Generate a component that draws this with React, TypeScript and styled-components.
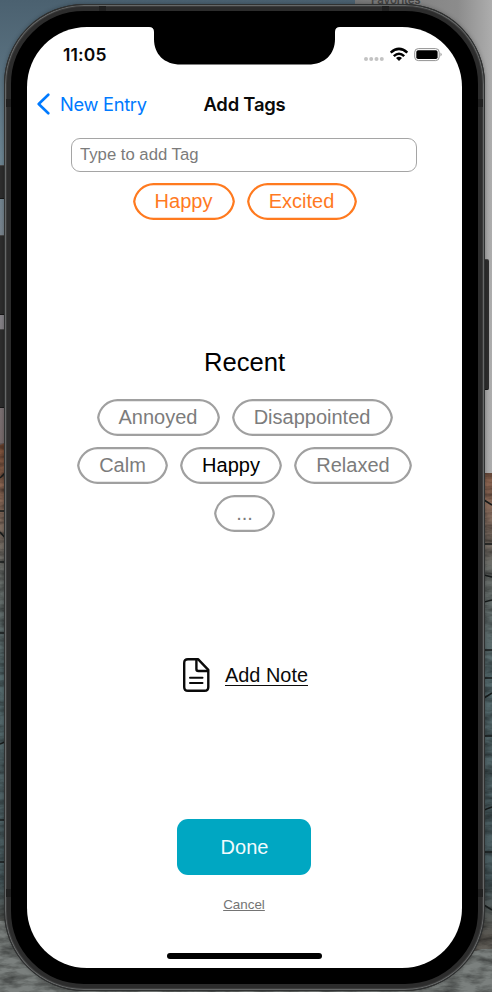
import React from "react";
import styled, { createGlobalStyle, css } from "styled-components";

const GlobalStyle = createGlobalStyle`
  * { box-sizing: border-box; }
  body { margin: 0; overflow: hidden; }
  button { font: inherit; border: 0; background: none; padding: 0; cursor: pointer; }
`;

const helvetica = css`font-family: "Liberation Sans", Arial, sans-serif;`;
const system = css`font-family: Inter, "Liberation Sans", sans-serif;`;

const Desktop = styled.div`
  position: relative;
  width: 492px;
  height: 992px;
  padding: 4px 7px 1px 4px;
  overflow: hidden;
  background: #566a76;
`;

const Wallpaper = styled.svg`
  position: absolute;
  inset: 0;
`;

const WindowLabel = styled.span`
  ${system}
  position: absolute;
  left: 371px;
  top: -7px;
  font-size: 11.5px;
  line-height: 14px;
  font-weight: 600;
  letter-spacing: -0.2px;
  color: #454545;
`;

const SideButton = styled.span<{ $top: number; $height: number; $right?: boolean }>`
  position: absolute;
  top: ${(p) => p.$top}px;
  ${(p) => (p.$right ? "right: 3px; width: 5px; border-radius: 0 2px 2px 0;" : "left: 0; width: 5px;")}
  height: ${(p) => p.$height}px;
  background: #2d2d2d;
  border-top: 1px solid #494949;
  border-bottom: 1px solid #171717;
`;

const Phone = styled.main`
  position: relative;
  width: 481px;
  height: 987px;
  padding: 16px;
  border-radius: 80px;
  background: #000;
  border: 7px solid #2c2c2c;
  box-shadow: 0 0 4px rgba(0, 0, 0, 0.3);
  &::before {
    content: "";
    position: absolute;
    inset: -7px;
    border-radius: 80px;
    border: 1px solid #303232;
    box-shadow: inset 0 0 0 1px #666868, inset 0 0 0 2px #3b3b3b;
  }
`;

const Antenna = styled.span<{ $side: "left" | "right" | "top"; $at: number }>`
  position: absolute;
  background: #202020;
  ${(p) =>
    p.$side === "top"
      ? `top: -5px; left: ${p.$at}px; width: 7px; height: 5px;`
      : `${p.$side}: -5px; top: ${p.$at}px; width: 5px; height: 8px;`}
`;

const Screen = styled.section`
  position: relative;
  display: flex;
  flex-direction: column;
  align-items: center;
  width: 435px;
  height: 941px;
  border-radius: 60px;
  background: #fff;
  overflow: hidden;
`;

const Notch = styled.svg`
  position: absolute;
  top: -1px;
  left: 122px;
`;

const StatusBar = styled.div`
  display: flex;
  justify-content: space-between;
  align-items: center;
  width: 100%;
  height: 55px;
  padding: 0 20.5px 0 36px;
`;

const Time = styled.time`
  ${system}
  font-size: 17.5px;
  font-weight: 600;
  letter-spacing: 0.15px;
  color: #080808;
`;

const NavBar = styled.header`
  display: grid;
  grid-template-columns: 1fr auto 1fr;
  align-items: center;
  width: 100%;
  height: 43px;
  margin-bottom: 2px;
  padding: 0 10px;
`;

const BackButton = styled.button`
  ${system}
  display: flex;
  align-items: center;
  gap: 9px;
  font-size: 18.3px;
  letter-spacing: -0.3px;
  color: #007aff;
  white-space: nowrap;
`;

const Title = styled.h1`
  ${system}
  margin: 0;
  font-size: 18.4px;
  font-weight: 600;
  letter-spacing: -0.2px;
  color: #090909;
`;

const TagInput = styled.input`
  ${helvetica}
  width: 346px;
  height: 34px;
  margin: 11px 1px 0 0;
  padding: 0 8px;
  border: 1px solid #a5a5a5;
  border-radius: 9px;
  outline: 0;
  font-size: 16.7px;
  &::placeholder { color: #7b7b7b; opacity: 1; }
`;

const TagList = styled.div<{ $offset: number }>`
  display: flex;
  flex-wrap: wrap;
  justify-content: center;
  gap: 11px 12px;
  width: 346px;
  margin-top: ${(p) => p.$offset}px;
`;

const TagButton = styled.button<{ $width: number; $text: string }>`
  ${helvetica}
  position: relative;
  width: ${(p) => p.$width}px;
  height: 37px;
  font-size: 20px;
  line-height: 37px;
  color: ${(p) => p.$text};
`;

const TagOutline = styled.svg`
  position: absolute;
  inset: 0;
`;

const SectionTitle = styled.h2`
  ${helvetica}
  margin: 126px 0 0;
  font-size: 25.6px;
  line-height: 32px;
  font-weight: 400;
  color: #000;
`;

const NoteButton = styled.button`
  ${helvetica}
  display: flex;
  align-items: center;
  gap: 14px;
  height: 36px;
  margin: 125px 0 0 1px;
  font-size: 19.9px;
  color: #0a0a0a;
`;

const Underlined = styled.span`
  line-height: 20px;
  border-bottom: 1px solid currentColor;
`;

const DoneButton = styled.button`
  ${helvetica}
  width: 134px;
  height: 56px;
  margin: 125.5px 1px 0 0;
  padding: 1px 0 0 1px;
  border-radius: 11px;
  background: #00a7c2;
  color: #f2fbfd;
  font-size: 20px;
`;

const CancelButton = styled.button`
  ${helvetica}
  margin: 22.5px 1px 0 0;
  font-size: 13.4px;
  line-height: 16px;
  color: #747474;
  text-decoration: underline;
  text-underline-offset: 1px;
`;

const HomeIndicator = styled.div`
  width: 155px;
  height: 6px;
  margin: auto 0 9px;
  border-radius: 3px;
  background: #000;
`;

type TagProps = { label: string; width: number; stroke?: string; text?: string };

function Tag({ label, width, stroke = "#a0a0a0", text = "#7c7c7c" }: TagProps) {
  const r = width - 20.5;
  return (
    <TagButton $width={width} $text={text}>
      <TagOutline width={width} height={37} fill="none" stroke={stroke} strokeWidth={2.2} strokeLinejoin="round">
        <path d={`M20.5 1.2H${r}A20 20 0 0 1 ${width - 1.2} 18.5A20 20 0 0 1 ${r} 35.8H20.5A20 20 0 0 1 1.2 18.5A20 20 0 0 1 20.5 1.2Z`} />
      </TagOutline>
      {label}
    </TagButton>
  );
}

const recentTags: TagProps[] = [
  { label: "Annoyed", width: 123 },
  { label: "Disappointed", width: 161 },
  { label: "Calm", width: 91 },
  { label: "Happy", width: 102, text: "#000" },
  { label: "Relaxed", width: 118 },
  { label: "...", width: 61 },
];

function Scenery() {
  return (
    <Wallpaper width="492" height="992" viewBox="0 0 492 992">
      <defs>
        <linearGradient id="sky" x1="0" y1="0" x2="0" y2="1">
          <stop offset="0" stopColor="#4b6170" />
          <stop offset=".35" stopColor="#6b8492" />
          <stop offset=".7" stopColor="#858388" />
          <stop offset="1" stopColor="#76696a" />
        </linearGradient>
        <linearGradient id="panel" x1="0" y1="0" x2="1" y2="0">
          <stop offset="0" stopColor="#777" />
          <stop offset=".75" stopColor="#8c8c8c" />
          <stop offset="1" stopColor="#adadad" />
        </linearGradient>
        <linearGradient id="rock" x1="0" y1="0" x2="0" y2="1">
          <stop offset="0" stopColor="#7a4d36" />
          <stop offset=".1" stopColor="#8d6a58" />
          <stop offset=".23" stopColor="#6a6d69" />
          <stop offset=".42" stopColor="#566b6e" />
          <stop offset=".8" stopColor="#4a5c60" />
          <stop offset=".9" stopColor="#5b5852" />
          <stop offset="1" stopColor="#75716c" />
        </linearGradient>
        <filter id="grain" x="0" y="0" width="1" height="1">
          <feTurbulence type="fractalNoise" baseFrequency=".05 .16" numOctaves="4" seed="8" />
          <feColorMatrix values="0 0 0 0 0  0 0 0 0 0  0 0 0 0 0  1.8 0 0 0 -.65" />
        </filter>
      </defs>
      <rect width="492" height="445" fill="url(#sky)" />
      <rect x="355" width="137" height="473" fill="url(#panel)" />
      <path d="M0 445L12 440V992H0ZM12 473H492V992H12Z" fill="url(#rock)" />
      <path d="M0 921L40 922L100 975L390 975L482 949H492V992H0Z" fill="#7b807e" />
      <rect y="443" width="355" height="549" filter="url(#grain)" opacity=".5" />
      <rect x="355" y="473" width="137" height="519" filter="url(#grain)" opacity=".5" />
      <path
        d="M0 478L7 471M0 511H7M0 532L7 540M0 562H7M0 633H7M0 744L7 741M0 820H7M0 862H7M484 500L492 505M484 544H492M484 575L492 577M484 602L492 600M484 650H492M484 678H492M484 698L492 693M484 736H492M484 810L492 807M484 852H492M484 905L492 910"
        fill="none" stroke="#171b1b" strokeWidth="1.5"
      />
    </Wallpaper>
  );
}

export default function App() {
  return (
    <Desktop>
      <GlobalStyle />
      <Scenery />
      <WindowLabel>Favorites</WindowLabel>
      <SideButton $top={165} $height={34} />
      <SideButton $top={235} $height={80} />
      <SideButton $top={329} $height={79} />
      <SideButton $top={259} $height={131} $right />
      <Phone>
        <Antenna $side="top" $at={88} />
        <Antenna $side="top" $at={371} />
        <Antenna $side="left" $at={88} />
        <Antenna $side="right" $at={88} />
        <Antenna $side="left" $at={878} />
        <Antenna $side="right" $at={878} />
        <Screen>
          <Notch width="191" height="39">
            <path d="M0 0H191V1Q186 1 186 6V13C186 28 176 38.5 159 38.5H32C15 38.5 5 28 5 13V6Q5 1 0 1Z" />
          </Notch>
          <StatusBar>
            <Time>11:05</Time>
            <svg width="79" height="16" viewBox="0 0 79 16">
              <g fill="#c3c3c3">
                <circle cx="3" cy="12" r="2" /><circle cx="8.2" cy="12" r="2" />
                <circle cx="13.5" cy="12" r="2" /><circle cx="18.8" cy="12" r="2" />
              </g>
              <g fill="none" stroke="#000" strokeWidth="2.6">
                <path d="M27.7 5.6Q36 -1.8 44.3 5.6" />
                <path d="M30.8 9.1Q36 4.4 41.2 9.1" />
              </g>
              <path d="M33 10.9Q36 8.6 39 10.9L36 14Z" />
              <rect x="51.7" y="1.6" width="24.5" height="12" rx="3.6" fill="none" stroke="#929292" />
              <rect x="53.3" y="3.2" width="21.3" height="8.8" rx="1.8" />
              <path d="M77.5 5.5Q79.8 7.5 77.5 9.6Z" fill="#929292" />
            </svg>
          </StatusBar>
          <NavBar>
            <BackButton>
              <svg width="14" height="22" viewBox="0 0 14 22" fill="none" stroke="#007aff" strokeWidth="2.6" strokeLinecap="round" strokeLinejoin="round">
                <path d="M11.3 1.7L1.7 11L11.3 20.3" />
              </svg>
              New Entry
            </BackButton>
            <Title>Add Tags</Title>
            <span />
          </NavBar>
          <TagInput placeholder="Type to add Tag" />
          <TagList $offset={11}>
            <Tag label="Happy" width={102} stroke="#ff7a1f" text="#ff7a1f" />
            <Tag label="Excited" width={110} stroke="#ff7a1f" text="#ff7a1f" />
          </TagList>
          <SectionTitle>Recent</SectionTitle>
          <TagList $offset={21}>
            {recentTags.map((tag) => <Tag key={tag.label} {...tag} />)}
          </TagList>
          <NoteButton>
            <svg width="29" height="36" viewBox="0 0 29 36" fill="none" stroke="#0a0a0a" strokeWidth="2.4" strokeLinejoin="round">
              <path d="M16 2.2H6Q2.2 2.2 2.2 6V30Q2.2 33.8 6 33.8H22.5Q26.3 33.8 26.3 30V12.8Z" />
              <path d="M14.4 2.2V12Q14.4 14 16.4 14H26.3" />
              <path d="M8 20.7H20.5M8 26H20.5" strokeWidth="2" strokeLinecap="round" />
            </svg>
            <Underlined>Add Note</Underlined>
          </NoteButton>
          <DoneButton>Done</DoneButton>
          <CancelButton>Cancel</CancelButton>
          <HomeIndicator />
        </Screen>
      </Phone>
    </Desktop>
  );
}
